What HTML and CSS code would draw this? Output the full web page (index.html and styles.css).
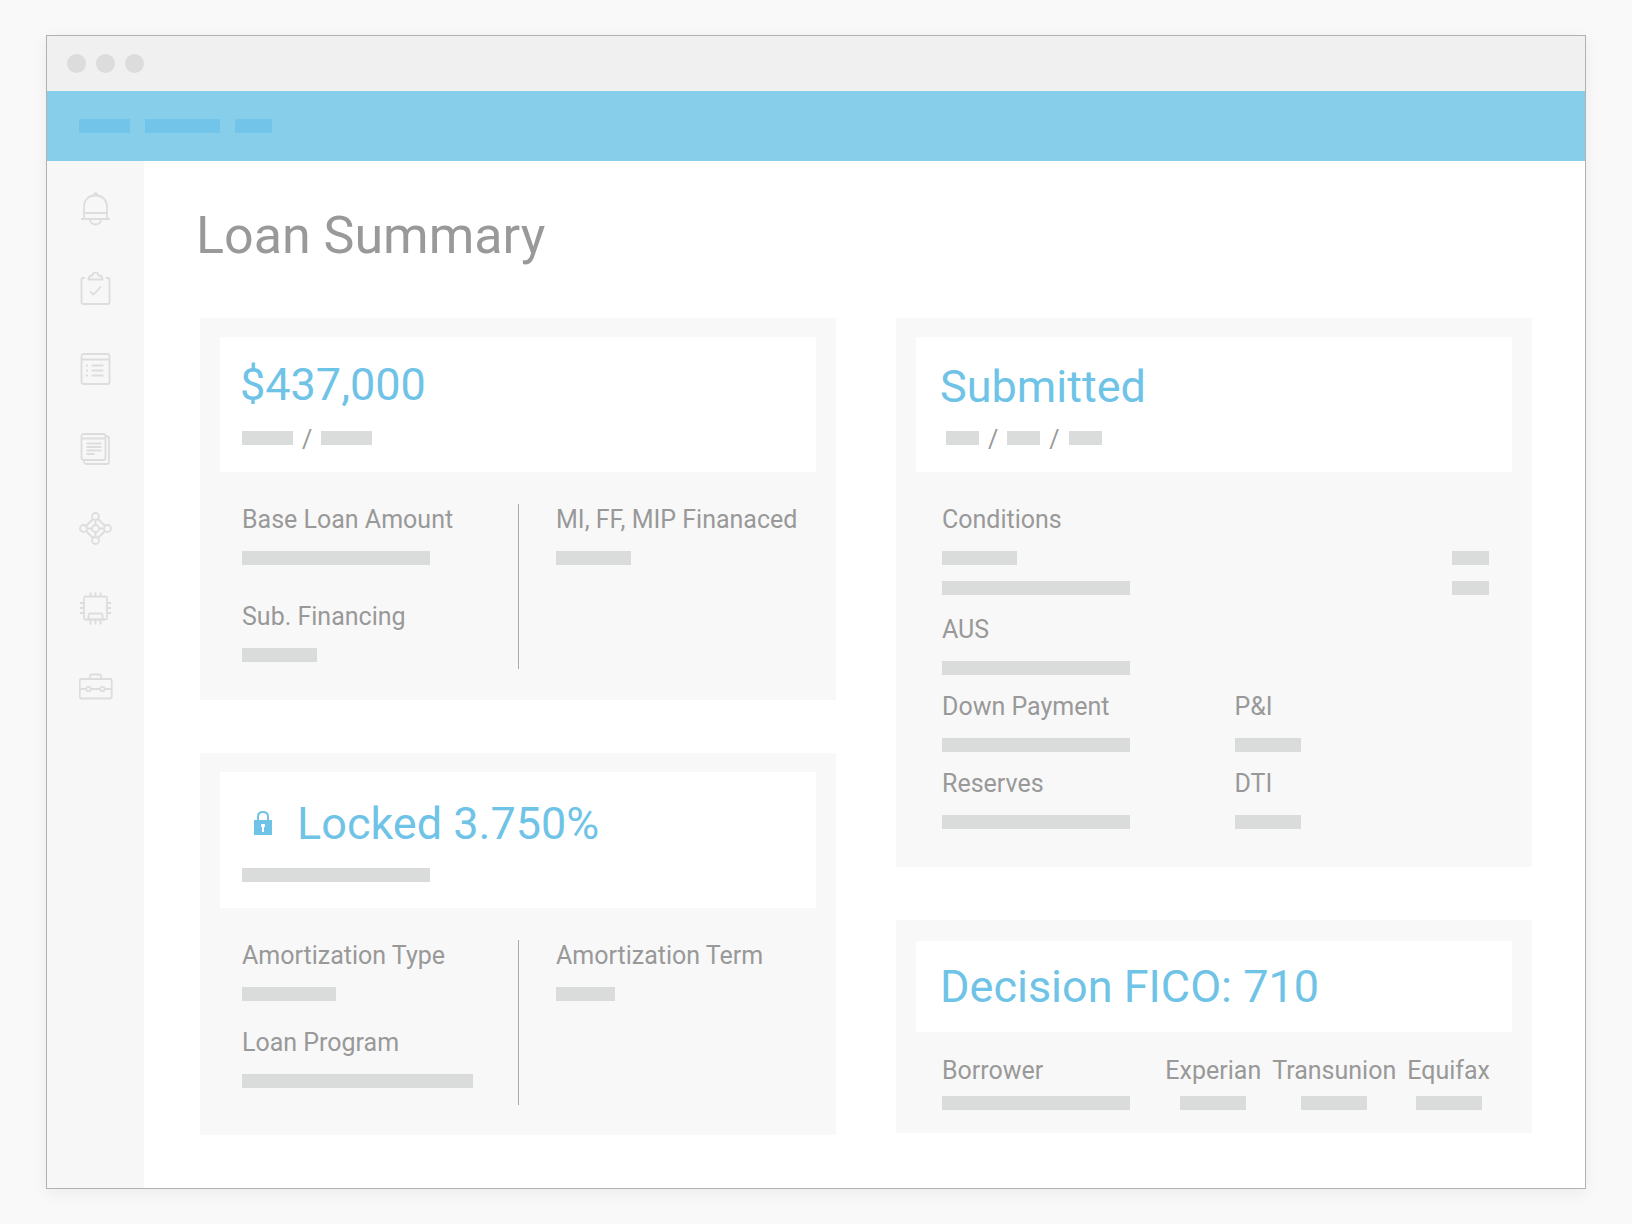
FILE: index.html
```
<!DOCTYPE html>
<html lang="en">
  <head>
    <meta charset="UTF-8" />
    <meta name="viewport" content="width=device-width, initial-scale=1.0" />
    <title>Loan Summary</title>
    <link rel="stylesheet" href="styles.css">
  </head>
  <body>
    <div class="window">
      <div class="title-bar">
        <span class="dot"></span>
        <span class="dot"></span>
        <span class="dot"></span>
      </div>

      <header class="top-nav">
        <span class="nav-item w-51"></span>
        <span class="nav-item w-75"></span>
        <span class="nav-item w-37"></span>
      </header>

      <div class="content">
        <nav class="sidebar">
          <a href="#" aria-label="Notifications">
            <svg class="icon" viewBox="0 0 34 34">
              <path d="M5 26V14.500C5 8 9.500 3.500 16.500 3.500S28 8 28 14.500V26M2 27h29M5 21h23M11 27.500c0 3 2.500 5 5.500 5s5.500-2 5.500-5M15 3.500c0-3 3-3 3 0" />
            </svg>
          </a>
          <a href="#" aria-label="Tasks">
            <svg class="icon" viewBox="0 0 34 34">
              <path d="M6 6H4Q2.500 6 2.500 7.500v23Q2.500 32 4 32h25q1.500 0 1.500-1.500v-23Q30.500 6 29 6H27M9.500 7.500c0-3 2-4 4-4 .5-4 5.500-4 6 0 2 0 4 1 4 4zM11 19.500l3.500 3 7.500-8" />
            </svg>
          </a>
          <a href="#" aria-label="Conditions">
            <svg class="icon" viewBox="0 0 34 34">
              <rect x="2.500" y="2" width="28" height="30" rx="2" />
              <path d="M2.500 7.500h28M12.500 13.500h12M12.500 18.500h12M12.500 23.500h12M7 13.500h2M7 18.500h2M7 23.500h2" />
            </svg>
          </a>
          <a href="#" aria-label="Documents">
            <svg class="icon" viewBox="0 0 34 34">
              <rect x="2.500" y="2" width="24" height="26" rx="2" />
              <path d="M2.500 6.500h24M26.500 4.500H28Q30 4.500 30 6.500v23.500q0 2-2 2H7.500q-2.500 0-3-4M7.500 11.500h15M7.500 15h15M7.500 18.500h15M7.500 22h8" />
            </svg>
          </a>
          <a href="#" aria-label="Network">
            <svg class="icon" viewBox="0 0 34 34">
              <circle cx="16.500" cy="4.500" r="3.500" />
              <circle cx="4.500" cy="16.500" r="3.500" />
              <circle cx="28.500" cy="16.500" r="3.500" />
              <circle cx="16.500" cy="28.500" r="3.500" />
              <circle cx="16.500" cy="16.500" r="3.500" />
              <path d="M14 7l-7 7M19 7l7 7M7 19l7 7M26 19l-7 7M16.500 8v5M16.500 20v5M8 16.500h5M20 16.500h5" />
            </svg>
          </a>
          <a href="#" aria-label="Processing">
            <svg class="icon" viewBox="0 0 34 34">
              <rect x="5" y="4.500" width="23" height="23" rx="1.500" />
              <path d="M11.500 4.500v-4M16.500 4.500v-4M21.500 4.500v-4M5 11H1M5 16H1M5 21H1M32 11h-4M32 16h-4M32 21h-4M11.500 27.500v5M16.500 27.500v5M21.500 27.500v5M9.500 27.500v-4q0-2 2-2h10q2 0 2 2v4z" />
            </svg>
          </a>
          <a href="#" aria-label="Portfolio">
            <svg class="icon" viewBox="0 0 34 34">
              <rect x="0.750" y="7" width="32" height="19.500" rx="1.500" />
              <path d="M11 7V4Q11 2.500 12.500 2.500h8Q22 2.500 22 4v3M1 17h6.500M12 17h9.500M26 17h6.500" />
              <circle cx="9.500" cy="17" r="2.200" />
              <circle cx="23.500" cy="17" r="2.200" />
            </svg>
          </a>
        </nav>

        <main class="main">
          <h1>Loan Summary</h1>

          <div class="columns">
            <div class="column">
              <section class="card">
                <div class="card-head head-amount">
                  <h2>$437,000</h2>
                  <div class="bar-line">
                    <span class="bar w-51"></span>
                    <span>/</span>
                    <span class="bar w-51"></span>
                  </div>
                </div>
                <div class="split">
                  <dl class="fields fields-wide">
                    <div>
                      <dt>Base Loan Amount</dt>
                      <dd><span class="bar w-188"></span></dd>
                    </div>
                    <div>
                      <dt>Sub. Financing</dt>
                      <dd><span class="bar w-75"></span></dd>
                    </div>
                  </dl>
                  <dl class="fields">
                    <div>
                      <dt>MI, FF, MIP Finanaced</dt>
                      <dd><span class="bar w-75"></span></dd>
                    </div>
                  </dl>
                </div>
              </section>

              <section class="card rate-card">
                <div class="card-head head-lock">
                  <h2>
                    <svg class="lock" viewBox="0 0 18 24">
                      <path d="M4 11V5.500Q4 1 9 1t5 4.500V11" fill="none" stroke="currentColor" stroke-width="2" />
                      <path d="M0 9h18v15H0zM7 13v3h1v5h2v-5h1v-3z" fill="currentColor" fill-rule="evenodd" />
                    </svg>
                    Locked 3.750%
                  </h2>
                  <div class="bar-line"><span class="bar w-188"></span></div>
                </div>
                <div class="split">
                  <dl class="fields">
                    <div>
                      <dt>Amortization Type</dt>
                      <dd><span class="bar w-94"></span></dd>
                    </div>
                    <div>
                      <dt>Loan Program</dt>
                      <dd><span class="bar w-231"></span></dd>
                    </div>
                  </dl>
                  <dl class="fields">
                    <div>
                      <dt>Amortization Term</dt>
                      <dd><span class="bar w-59"></span></dd>
                    </div>
                  </dl>
                </div>
              </section>
            </div>

            <div class="column">
              <section class="card status-card">
                <div class="card-head head-status">
                  <h2>Submitted</h2>
                  <div class="bar-line date-line">
                    <span class="bar w-33"></span>
                    <span>/</span>
                    <span class="bar w-33"></span>
                    <span>/</span>
                    <span class="bar w-33"></span>
                  </div>
                </div>
                <div class="details">
                  <h3>Conditions</h3>
                  <ul class="conditions">
                    <li><span class="bar w-75"></span><span class="bar w-37"></span></li>
                    <li><span class="bar w-188"></span><span class="bar w-37"></span></li>
                  </ul>
                  <dl class="detail-grid">
                    <div class="full">
                      <dt>AUS</dt>
                      <dd><span class="bar w-188"></span></dd>
                    </div>
                    <div>
                      <dt>Down Payment</dt>
                      <dd><span class="bar w-188"></span></dd>
                    </div>
                    <div>
                      <dt>P&amp;I</dt>
                      <dd><span class="bar w-66"></span></dd>
                    </div>
                    <div>
                      <dt>Reserves</dt>
                      <dd><span class="bar w-188"></span></dd>
                    </div>
                    <div>
                      <dt>DTI</dt>
                      <dd><span class="bar w-66"></span></dd>
                    </div>
                  </dl>
                </div>
              </section>

              <section class="card score-card">
                <div class="card-head head-score">
                  <h2>Decision FICO: 710</h2>
                </div>
                <table class="scores">
                  <thead>
                    <tr>
                      <th>Borrower</th>
                      <th>Experian</th>
                      <th>Transunion</th>
                      <th>Equifax</th>
                    </tr>
                  </thead>
                  <tbody>
                    <tr>
                      <td><span class="bar w-188"></span></td>
                      <td><span class="bar w-66"></span></td>
                      <td><span class="bar w-66"></span></td>
                      <td><span class="bar w-66"></span></td>
                    </tr>
                  </tbody>
                </table>
              </section>
            </div>
          </div>
        </main>
      </div>
    </div>
  </body>
</html>
```
FILE: styles.css
```
* {
  box-sizing: border-box;
}
body {
  margin: 0;
  padding: 35px 46px;
  background-color: #F9F9F9;
  color: #999;
  font-family: Roboto, "Liberation Sans", sans-serif;
  font-size: 25px;
  line-height: 32px;
}
h1, h2, h3, dl, dd, ul {
  margin: 0;
  padding: 0;
  font-weight: 400;
}
ul {
  list-style: none;
}

.window {
  display: flex;
  flex-direction: column;
  min-height: calc(100vh - 70px);
  border: 1px solid #B2B2B2;
  background-color: #FFF;
  box-shadow: 0 4px 16px rgba(0, 0, 0, 0.06);
}

.title-bar {
  display: flex;
  align-items: center;
  gap: 10px;
  height: 55px;
  padding: 0 20px;
  background-color: #F0F0F0;
}
.dot {
  width: 19px;
  height: 19px;
  border-radius: 50%;
  background-color: #DCDCDC;
}

.top-nav {
  display: flex;
  align-items: center;
  gap: 15px;
  height: 70px;
  padding: 0 32px;
  background-color: #87CEEB;
}
.nav-item {
  height: 14px;
  background-color: #72C5E9;
}

.content {
  display: flex;
  flex: 1;
}

.sidebar {
  display: flex;
  flex-direction: column;
  align-items: center;
  gap: 46px;
  width: 97px;
  padding-top: 31px;
  background-color: #F7F7F7;
}
.sidebar a {
  height: 34px;
}
.icon {
  display: block;
  width: 34px;
  height: 34px;
  fill: none;
  stroke: #DDD;
  stroke-width: 1.8;
}

.main {
  flex: 1;
  padding: 45px 53px 53px 56px;
}
h1 {
  margin: 0 0 52px -4px;
  font-size: 52px;
  line-height: 60px;
}

.columns {
  display: grid;
  grid-template-columns: 1fr 1fr;
  gap: 60px;
}
.column {
  display: flex;
  flex-direction: column;
  gap: 53px;
}

.card {
  padding: 19px 20px 31px;
  background-color: #F8F8F8;
}
.card-head {
  display: flex;
  flex-direction: column;
  justify-content: space-between;
  min-height: 135px;
  padding: 22px 22px 27px;
  background-color: #FFF;
}
.card h2 {
  display: flex;
  align-items: center;
  margin-left: -2px;
  color: #6FC3E6;
  font-size: 45px;
  line-height: 52px;
}
.lock {
  width: 18px;
  height: 24px;
  margin: 0 25px 3px 14px;
}
.rate-card {
  padding-bottom: 30px;
}
.head-lock {
  min-height: 136px;
  padding-top: 26px;
  padding-bottom: 26px;
}
.head-status {
  padding-top: 24px;
}
.status-card .card-head,
.score-card .card-head {
  padding-left: 26px;
}

/* placeholder bars */
.bar {
  display: block;
  height: 14px;
  background-color: #DADCDC;
}
.bar-line {
  display: flex;
  gap: 9px;
  height: 14px;
  line-height: 18px;
}
.date-line {
  padding-left: 4px;
}
.w-33 { width: 33px; }
.w-37 { width: 37px; }
.w-51 { width: 51px; }
.w-59 { width: 59px; }
.w-66 { width: 66px; }
.w-75 { width: 75px; }
.w-94 { width: 94px; }
.w-188 { width: 188px; }
.w-231 { width: 231px; }

.split {
  display: grid;
  grid-template-columns: 1fr 1fr;
  min-height: 165px;
  margin-top: 32px;
}
.fields {
  display: flex;
  flex-direction: column;
  gap: 26px;
  padding-left: 22px;
  white-space: nowrap;
}
.fields-wide {
  gap: 36px;
}
.fields + .fields {
  padding-left: 37px;
  border-left: 1px solid #AAA;
}
dd {
  padding-top: 15px;
}

.status-card {
  padding-bottom: 38px;
}
.details {
  padding: 32px 23px 0 26px;
}
h3 {
  font-size: 25px;
}
.conditions {
  display: flex;
  flex-direction: column;
  gap: 16px;
  padding: 15px 0 19px;
}
.conditions li {
  display: flex;
  justify-content: space-between;
}
.detail-grid {
  display: grid;
  grid-template-columns: 1fr 1fr;
  gap: 16px 38px;
}
.full {
  grid-column: 1 / -1;
}

.score-card {
  padding-top: 21px;
  padding-bottom: 23px;
}
.head-score {
  min-height: 91px;
  padding-top: 20px;
  padding-bottom: 16px;
}
.scores {
  width: 100%;
  padding: 23px 22px 0 26px;
  border-spacing: 0;
}
.scores th {
  padding: 0 0 0 11px;
  font-weight: 400;
  white-space: nowrap;
}
.scores td {
  padding: 9px 0 0 11px;
}
.scores th:first-child,
.scores td:first-child {
  width: 100%;
  padding-left: 0;
  text-align: left;
}
.scores .bar {
  margin: 0 auto;
}
.scores td:first-child .bar {
  margin: 0;
}
```
